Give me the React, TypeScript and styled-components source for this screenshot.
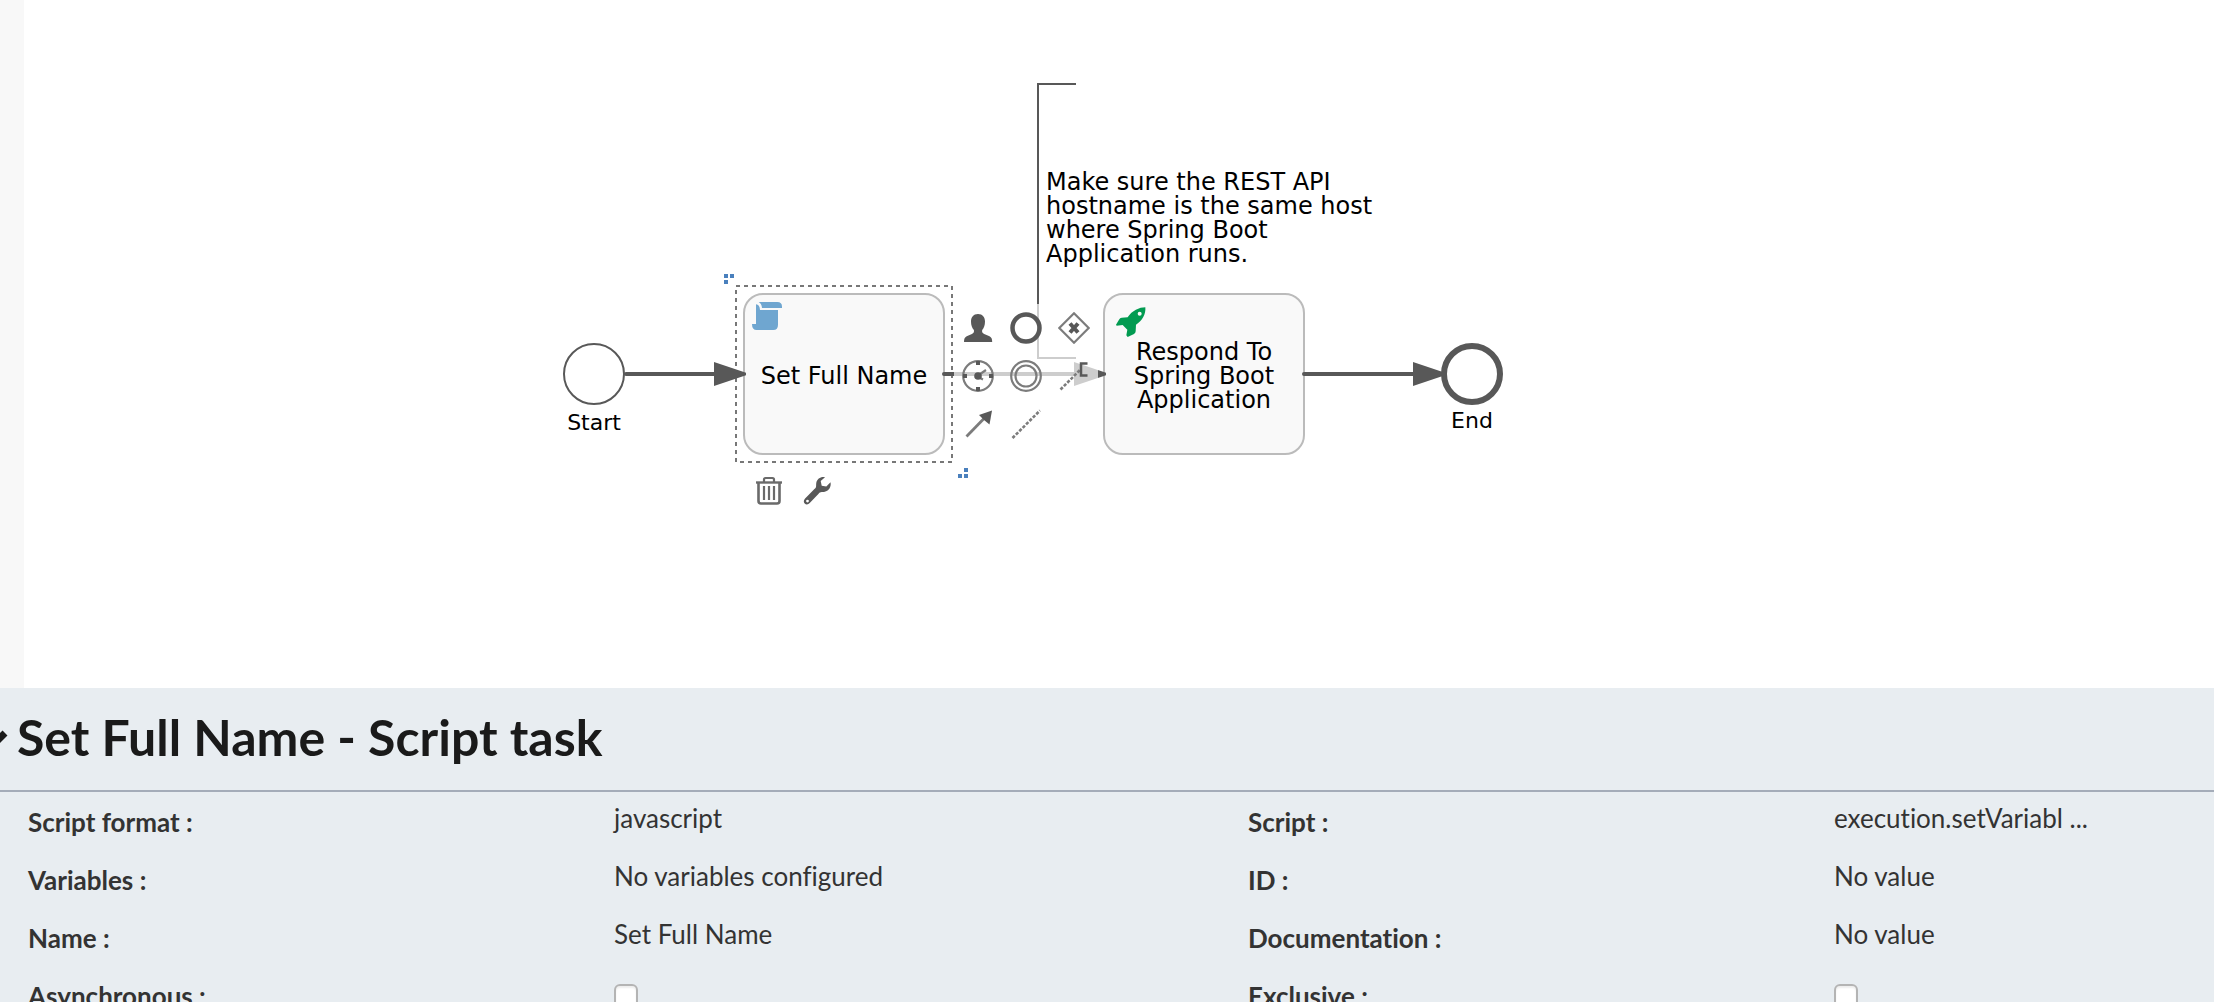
import React from 'react';
import styled, { createGlobalStyle } from 'styled-components';

const GlobalStyle = createGlobalStyle`
  * { box-sizing: border-box; }
  body { margin: 0; overflow: hidden; background: #fff; }
`;

const INK = '#585858';
const SOFT_INK = '#7c7c7c';

const Page = styled.div`
  display: flex;
  flex-direction: column;
  height: 100vh;
  overflow: hidden;
  font-family: Lato, sans-serif;
  font-variant-ligatures: none;
  color: #333;
`;

const Editor = styled.main`
  display: flex;
  flex: 0 0 688px;
`;

const PaletteEdge = styled.aside`
  flex: 0 0 24px;
  background: #f8f8f8;
`;

const Canvas = styled.section`
  position: relative;
  flex: 1;
  overflow: hidden;
  font-family: Verdana, 'DejaVu Sans', sans-serif;
  color: #000;
`;

const Shapes = styled.svg`
  position: absolute;
  inset: 0;
  width: 100%;
  height: 100%;
`;

type Spot = { $x: number; $y: number };

const Task = styled.div<Spot>`
  position: absolute;
  left: ${p => p.$x}px;
  top: ${p => p.$y}px;
  display: flex;
  align-items: center;
  justify-content: center;
  width: 202px;
  height: 162px;
  padding: 4px 12px 0;
  border: 2px solid #bbb;
  border-radius: 20px;
  background: #f9f9f9;
  font-size: 24px;
  line-height: 24px;
  text-align: center;
`;

const TaskIcon = styled.svg`
  position: absolute;
  left: 6px;
  top: 6px;
  width: 32px;
  height: 32px;
`;

const RocketIcon = styled(TaskIcon)`
  left: 10px;
  top: 11px;
`;

const EventLabel = styled.div<Spot>`
  position: absolute;
  left: ${p => p.$x}px;
  top: ${p => p.$y}px;
  width: 100px;
  font-size: 22px;
  line-height: 24px;
  text-align: center;
`;

const Note = styled.p<Spot>`
  position: absolute;
  left: ${p => p.$x}px;
  top: ${p => p.$y}px;
  width: 340px;
  margin: 0;
  font-size: 24px;
  line-height: 24px;
`;

const Pad = styled.div<Spot & { $cols: number }>`
  position: absolute;
  left: ${p => p.$x}px;
  top: ${p => p.$y}px;
  display: grid;
  grid-template-columns: repeat(${p => p.$cols}, 48px);
  grid-auto-rows: 48px;
`;

const PadButton = styled.button`
  display: flex;
  align-items: center;
  justify-content: center;
  padding: 0;
  border: 0;
  background: rgba(255, 255, 255, 0.7);
  color: ${INK};
  cursor: pointer;

  svg { width: 32px; height: 32px; }
`;

const Panel = styled.section`
  flex: 1;
  overflow: hidden;
  background: #e8edf1;
`;

const PanelHeader = styled.header`
  display: flex;
  align-items: center;
  height: 104px;
  padding-bottom: 4px;
  border-bottom: 2px solid #a4acb9;
  color: #1a1a1a;
`;

const Toggle = styled.button`
  display: flex;
  flex: 0 0 32px;
  margin-left: -23px;
  padding: 8px 0 0;
  border: 0;
  background: none;
  color: inherit;
  cursor: pointer;

  svg { width: 32px; height: 24px; }
`;

const Title = styled.h2`
  margin: 0 8px;
  font-size: 50px;
  line-height: 60px;
  font-weight: 700;
  white-space: nowrap;
`;

const Properties = styled.div`
  display: grid;
  grid-template-columns: 1220fr 966fr;
  grid-auto-rows: 58px;
  padding-left: 28px;
  font-size: 26px;
  line-height: 36px;
`;

const Property = styled.div<{ $last: boolean }>`
  display: grid;
  grid-template-columns: ${p => (p.$last ? '586fr 380fr' : '586fr 634fr')};
  align-items: start;
`;

const Name = styled.label`
  padding-top: 12px;
  font-weight: 700;
`;

const Value = styled.output`
  padding-top: 8px;
`;

const Check = styled.input`
  appearance: none;
  width: 24px;
  height: 24px;
  margin: 18px 0 0;
  border: 2px solid #b4b4b4;
  border-radius: 6px;
  background: #fff;
  box-shadow: inset 0 2px 2px #eee;

  &:checked { background: #7a8aa0; }
`;

const tools: { label: string; art: React.ReactNode }[] = [
  {
    label: 'Append user task',
    art: (
      <path
        fill="currentColor"
        d="M16 2c4.600 0 7 3.200 7 7.500 0 3.800-1.200 6.800-2.800 8.500-.5 2 .3 3.200 2 4l5.300 2.300c2 1 2.700 2.700 2.700 5.700H2c0-3 .7-4.700 2.700-5.700L9.900 22c1.700-.8 2.400-2 2-4C10.200 16.300 9 13.300 9 9.500 9 5.200 11.400 2 16 2z"
      />
    ),
  },
  { label: 'Append end event', art: <circle cx="16" cy="16" r="13.500" fill="none" stroke="currentColor" strokeWidth="4.500" /> },
  {
    label: 'Append exclusive gateway',
    art: (
      <g fill="none">
        <path d="M16 1.300 30.700 16 16 30.700 1.300 16z" stroke={SOFT_INK} strokeWidth="2.200" />
        <path d="M12 11.500 20 20.500M20 11.500 12 20.500" stroke="currentColor" strokeWidth="4" />
      </g>
    ),
  },
  {
    label: 'Append timer event',
    art: (
      <g fill="none" stroke={SOFT_INK}>
        <circle cx="16" cy="16" r="14.800" strokeWidth="2.200" />
        <path d="M16 1v4M16 27v4M1 16h4M27 16h4" stroke={INK} strokeWidth="4" />
        <path d="M16 15.500 24 10M16 17 21 19.500" strokeWidth="2.200" />
        <circle cx="16" cy="16" r="3.800" fill={INK} stroke="none" />
      </g>
    ),
  },
  {
    label: 'Append intermediate event',
    art: (
      <g fill="none" stroke={SOFT_INK} strokeWidth="2.200">
        <circle cx="16" cy="16" r="14.800" />
        <circle cx="16" cy="16" r="10.500" />
      </g>
    ),
  },
  {
    label: 'Append text annotation',
    art: (
      <g fill="none">
        <path d="M2.500 29.500 22 10" stroke={SOFT_INK} strokeWidth="2.600" strokeDasharray="3.200 1.600" />
        <path d="M29.500 3.500H23V15.500H29.500" stroke="currentColor" strokeWidth="2.500" />
      </g>
    ),
  },
  {
    label: 'Sequence flow',
    art: (
      <g>
        <path d="M4.500 28.500 22 10.500" fill="none" stroke={SOFT_INK} strokeWidth="2.800" />
        <path d="M30 2.500 27.500 16.500 22 12 17 7z" fill="currentColor" />
      </g>
    ),
  },
  {
    label: 'Association',
    art: <path d="M2.500 30 30 2.500" fill="none" stroke={SOFT_INK} strokeWidth="2.600" strokeDasharray="3.200 1.600" />,
  },
];

const edits: { label: string; art: React.ReactNode }[] = [
  {
    label: 'Delete element',
    art: (
      <g fill="none" stroke="#6a6a6a">
        <path d="M3 7.500h26" strokeWidth="2.400" />
        <path d="M11 7V4.500q0-1.500 1.500-1.500h7Q21 3 21 4.500V7" strokeWidth="2.200" />
        <path d="M5.500 8v18q0 2.500 2.500 2.500h16q2.500 0 2.500-2.500V8" strokeWidth="2.600" />
        <path d="M11 11v14M16 11v14M21 11v14" strokeWidth="2.200" />
      </g>
    ),
  },
  {
    label: 'Change element type',
    art: (
      <path
        fill="currentColor"
        fillRule="evenodd"
        d="M24 2.200c-4-.9-8 1.500-8.700 5.600-.3 1.700 0 3-.3 4.200-.3 1-1.300 1.800-2.300 2.800L4.100 23.500c-1.800 1.800-1.500 3.900-.4 5 1.300 1.300 3.600 1.200 5-.4l8.700-9.200c1-1 2-1.700 3.300-1.800 3.200-.1 6-1 7.800-3.700 1.100-1.700 1.500-4 1-6.200l-4.200 4.300-4.600-.7-1-4.700zM6.500 24.700a1.400 1.400 0 1 1 0 2.800 1.400 1.400 0 0 1 0-2.800z"
      />
    ),
  },
];

type Field = { id: string; name: string; value?: string };

const fields: Field[] = [
  { id: 'format', name: 'Script format', value: 'javascript' },
  { id: 'script', name: 'Script', value: 'execution.setVariabl ...' },
  { id: 'variables', name: 'Variables', value: 'No variables configured' },
  { id: 'id', name: 'ID', value: 'No value' },
  { id: 'name', name: 'Name', value: 'Set Full Name' },
  { id: 'documentation', name: 'Documentation', value: 'No value' },
  { id: 'async', name: 'Asynchronous' },
  { id: 'exclusive', name: 'Exclusive' },
];

const Flow = ({ from, to }: { from: number; to: number }) => (
  <g>
    <path d={`M${from} 374H${to - 8}`} stroke={INK} strokeWidth="4" strokeLinecap="round" />
    <path d={`M${to - 32} 362 ${to} 372.800V375.200L${to - 32} 386z`} fill={INK} />
  </g>
);

function Diagram() {
  return (
    <Canvas aria-label="Process diagram">
      <Task $x={719} $y={293}>
        <TaskIcon viewBox="-3 -3 96 96" aria-hidden="true">
          <path fill="#6fa6d0" d="M20 0H76Q90 0 90 14V18H30Q29 5 20 0zM12 7Q23 8 24 24H78V68Q78 84 64 84H14Q0 84 0 66H12z" />
        </TaskIcon>
        Set Full Name
      </Task>
      <Task $x={1079} $y={293}>
        <RocketIcon viewBox="-3 -3 96 96" aria-hidden="true">
          <path
            fill="#029b51"
            fillRule="evenodd"
            d="M88 1C70 1 48 11 35 31L17 32Q12 32 9 38L0 53 2 56 20 54 34 68 31 85 35 90 54 81Q59 78 59 73L60 53C79 41 90 22 88 1zM71 14a6 6 0 1 1 0 12 6 6 0 0 1 0-12z"
          />
        </RocketIcon>
        Respond To Spring Boot Application
      </Task>

      <Shapes viewBox="24 0 2190 688" preserveAspectRatio="xMinYMin" fill="none">
        <circle cx="594" cy="374" r="30" stroke={INK} strokeWidth="2" />
        <path d="M1076 84H1038V358H1076" stroke={INK} strokeWidth="2" />
        <rect x="736" y="286" width="216" height="176" stroke="#777" strokeWidth="2" strokeDasharray="4 4" />
        <Flow from={626} to={746} />
        <Flow from={944} to={1106} />
        <Flow from={1304} to={1445} />
        <circle cx="1472" cy="374" r="28" fill="#fff" stroke={INK} strokeWidth="6" />
        <path
          fill="#4a80bd"
          d="M724 274h4v4h-4zM730 274h4v4h-4zM724 280h4v4h-4zM964 468h4v4h-4zM958 474h4v4h-4zM964 474h4v4h-4z"
        />
      </Shapes>

      <EventLabel $x={520} $y={411}>Start</EventLabel>
      <EventLabel $x={1398} $y={409}>End</EventLabel>
      <Note $x={1022} $y={170}>Make sure the REST API hostname is the same host where Spring Boot Application runs.</Note>

      <Pad $x={930} $y={304} $cols={3}>
        {tools.map(t => (
          <PadButton key={t.label} type="button" aria-label={t.label}>
            <svg viewBox="0 0 32 32">{t.art}</svg>
          </PadButton>
        ))}
      </Pad>
      <Pad $x={721} $y={467} $cols={2}>
        {edits.map(t => (
          <PadButton key={t.label} type="button" aria-label={t.label}>
            <svg viewBox="0 0 32 32">{t.art}</svg>
          </PadButton>
        ))}
      </Pad>
    </Canvas>
  );
}

export default function App() {
  return (
    <Page>
      <GlobalStyle />
      <Editor>
        <PaletteEdge />
        <Diagram />
      </Editor>
      <Panel>
        <PanelHeader>
          <Toggle type="button" aria-label="Collapse properties">
            <svg viewBox="0 0 32 24" aria-hidden="true">
              <path d="M2 4 15 17 28 4" fill="none" stroke="currentColor" strokeWidth="7" />
            </svg>
          </Toggle>
          <Title>Set Full Name - Script task</Title>
        </PanelHeader>
        <Properties>
          {fields.map((f, i) => (
            <Property key={f.id} $last={i % 2 === 1}>
              <Name htmlFor={f.id}>{f.name} :</Name>
              {f.value ? <Value id={f.id}>{f.value}</Value> : <Check id={f.id} type="checkbox" />}
            </Property>
          ))}
        </Properties>
      </Panel>
    </Page>
  );
}
